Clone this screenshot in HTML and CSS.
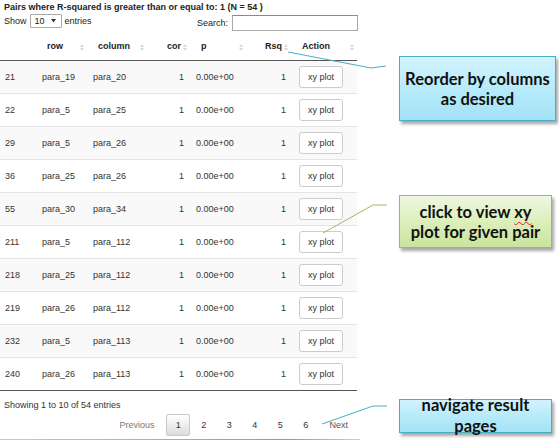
FILE: index.html
```html
<!DOCTYPE html>
<html>
<head>
<meta charset="utf-8">
<link rel="stylesheet" href="styles.css">
</head>
<body>
<div class="page">
  <div class="dt">
    <div class="title">Pairs where R-squared is greater than or equal to: 1 (N = 54 )</div>
    <div class="controls">
      <div class="length">Show <span class="select">10<svg class="caret" width="5" height="4" viewBox="0 0 5 4"><path d="M0 0H5L2.5 3.5Z" fill="#333"/></svg></span> entries</div>
      <div class="search">Search: <span class="input"></span></div>
    </div>
    <table class="grid">
      <colgroup>
        <col class="c0"><col class="c1"><col class="c2"><col class="c3"><col class="c4"><col class="c5"><col class="c6">
      </colgroup>
      <thead>
        <tr>
          <th></th>
          <th class="s">row</th>
          <th class="s">column</th>
          <th class="s num">cor</th>
          <th class="s">p</th>
          <th class="s num">Rsq</th>
          <th class="s">Action</th>
        </tr>
      </thead>
      <tbody>
        <tr><td>21</td><td>para_19</td><td>para_20</td><td class="num">1</td><td>0.00e+00</td><td class="num r2">1</td><td><span class="btn">xy plot</span></td></tr>
        <tr><td>22</td><td>para_5</td><td>para_25</td><td class="num">1</td><td>0.00e+00</td><td class="num r2">1</td><td><span class="btn">xy plot</span></td></tr>
        <tr><td>29</td><td>para_5</td><td>para_26</td><td class="num">1</td><td>0.00e+00</td><td class="num r2">1</td><td><span class="btn">xy plot</span></td></tr>
        <tr><td>36</td><td>para_25</td><td>para_26</td><td class="num">1</td><td>0.00e+00</td><td class="num r2">1</td><td><span class="btn">xy plot</span></td></tr>
        <tr><td>55</td><td>para_30</td><td>para_34</td><td class="num">1</td><td>0.00e+00</td><td class="num r2">1</td><td><span class="btn">xy plot</span></td></tr>
        <tr><td>211</td><td>para_5</td><td>para_112</td><td class="num">1</td><td>0.00e+00</td><td class="num r2">1</td><td><span class="btn">xy plot</span></td></tr>
        <tr><td>218</td><td>para_25</td><td>para_112</td><td class="num">1</td><td>0.00e+00</td><td class="num r2">1</td><td><span class="btn">xy plot</span></td></tr>
        <tr><td>219</td><td>para_26</td><td>para_112</td><td class="num">1</td><td>0.00e+00</td><td class="num r2">1</td><td><span class="btn">xy plot</span></td></tr>
        <tr><td>232</td><td>para_5</td><td>para_113</td><td class="num">1</td><td>0.00e+00</td><td class="num r2">1</td><td><span class="btn">xy plot</span></td></tr>
        <tr><td>240</td><td>para_26</td><td>para_113</td><td class="num">1</td><td>0.00e+00</td><td class="num r2">1</td><td><span class="btn">xy plot</span></td></tr>
      </tbody>
    </table>
    <div class="info">Showing 1 to 10 of 54 entries</div>
    <div class="paging">
      <span class="pb prev">Previous</span>
      <span class="pb n current">1</span>
      <span class="pb n">2</span>
      <span class="pb n">3</span>
      <span class="pb n">4</span>
      <span class="pb n">5</span>
      <span class="pb n">6</span>
      <span class="pb next">Next</span>
    </div>
    <div class="rule"></div>
  </div>

  <svg class="leaders" width="559" height="442" viewBox="0 0 559 442">
    <polyline points="288,52 371,68 386,66" fill="none" stroke="#4bacc6" stroke-width="1"/>
    <polyline points="387,205 373,205 323,233" fill="none" stroke="#9bbb59" stroke-width="1"/>
    <polyline points="322,424 373,406 387,406" fill="none" stroke="#4bacc6" stroke-width="1"/>
  </svg>

  <div class="callout blue c-reorder"><div class="txt">Reorder by columns<br>as desired</div></div>
  <div class="callout green c-click"><div class="txt">click to view <span class="spell">xy</span><br>plot for given pair</div></div>
  <div class="callout blue c-nav"><div class="txt">navigate result<br>pages</div></div>
</div>
</body>
</html>
```

FILE: styles.css
```css
* { box-sizing: border-box; }
html, body { margin: 0; padding: 0; background: #fff; }
body {
  font-family: "Liberation Sans", Arial, sans-serif;
  font-size: 9px;
  color: #333;
}
.page {
  position: relative;
  width: 559px;
  height: 442px;
  overflow: hidden;
}
.dt {
  width: 358px;
}
.title {
  font-weight: bold;
  line-height: 12px;
  padding: 1px 0 0 4px;
  color: #222;
  white-space: nowrap;
}
.controls {
  display: flex;
  justify-content: space-between;
  align-items: flex-start;
  height: 18px;
}
.length {
  padding-left: 4px;
  display: flex;
  align-items: center;
  height: 14px;
  margin-top: 1px;
  color: #222;
}
.select {
  display: inline-flex;
  align-items: center;
  justify-content: space-between;
  width: 32px;
  height: 14px;
  margin: 0 3px;
  padding: 0 5px 0 4px;
  border: 1px solid #a9a9a9;
  border-radius: 1px;
  background: #fff;
  color: #222;
}
.caret { display: block; }
.search {
  display: flex;
  align-items: center;
  height: 17px;
  margin-top: 1px;
  color: #222;
}
.input {
  display: inline-block;
  width: 126px;
  height: 16px;
  margin-left: 4px;
  border: 1px solid #a9a9a9;
  border-top-color: #8a8a8a;
  background: #fff;
}
.grid {
  margin-top: 2px;
  width: 357px;
  border-collapse: collapse;
  table-layout: fixed;
}
.c0 { width: 36px; }
.c1 { width: 51px; }
.c2 { width: 60px; }
.c3 { width: 43px; }
.c4 { width: 56px; }
.c5 { width: 45px; }
.c6 { width: 66px; }
th {
  position: relative;
  height: 27px;
  padding: 0 10px 0 11px;
  font-weight: bold;
  text-align: left;
  color: #222;
  border-bottom: 1px solid #555;
}
th.num { text-align: right; padding-right: 9px; }
th.s::before {
  content: "";
  position: absolute;
  right: 3px;
  top: 11px;
  width: 0;
  height: 0;
  border-left: 2.5px solid transparent;
  border-right: 2.5px solid transparent;
  border-bottom: 3px solid #d8d8d8;
}
th.s::after {
  content: "";
  position: absolute;
  right: 3px;
  top: 15px;
  width: 0;
  height: 0;
  border-left: 2.5px solid transparent;
  border-right: 2.5px solid transparent;
  border-top: 3px solid #d8d8d8;
}
td {
  height: 33px;
  padding: 0 6px;
  border-top: 1px solid #e4e4e4;
  white-space: nowrap;
  color: #333;
}
td:first-child { padding-left: 5px; }
tbody tr:first-child td { border-top: none; }
tbody tr:nth-child(odd) td { background: #f9f9f9; }
tbody tr:last-child td { border-bottom: 1px solid #555; }
td.num { text-align: right; }
td.r2 { padding-right: 5px; }
.btn {
  display: inline-flex;
  align-items: center;
  justify-content: center;
  width: 44px;
  height: 22px;
  margin-left: 2px;
  border: 1px solid #ccc;
  border-radius: 3px;
  background: #fff;
  color: #333;
}
.info {
  padding-left: 4px;
  margin-top: 7px;
  line-height: 14px;
  color: #333;
}
.paging {
  display: flex;
  justify-content: flex-end;
  align-items: center;
  height: 22px;
  margin-top: 2px;
}
.pb {
  display: flex;
  align-items: center;
  justify-content: center;
  height: 22px;
  border: 1px solid transparent;
  border-radius: 2px;
  margin-left: 2px;
  color: #333;
}
.pb.n { width: 23.5px; }
.prev { padding: 0 9px; color: #777; }
.next { padding: 0 9px; color: #555; }
.pb.current {
  border-color: #c9c9c9;
  background: linear-gradient(to bottom, #fff 0%, #dcdcdc 100%);
}
.rule {
  margin-top: 3px;
  height: 1px;
  width: 360px;
  background: linear-gradient(to right, #c8c8c8 0%, #999 80%, #ccc 100%);
}
.leaders {
  position: absolute;
  left: 0;
  top: 0;
  pointer-events: none;
}
.callout {
  position: absolute;
  display: flex;
  align-items: center;
  justify-content: center;
  text-align: center;
  font-family: Lato, "Open Sans", sans-serif;
  font-weight: 700;
  font-size: 16.5px;
  line-height: 20px;
  color: #111;
  box-shadow: 2px 3px 3px rgba(0,0,0,0.35);
}
.txt { white-space: nowrap; }
.blue {
  border: 1px solid #4bacc6;
  background: linear-gradient(to bottom, #d2f3fd 0%, #b7ebfa 50%, #a3e2f6 100%);
}
.green {
  border: 1px solid #9bbb59;
  background: linear-gradient(to bottom, #eff7e1 0%, #dcefbc 50%, #c9e49d 100%);
}
.c-reorder { left: 399px; top: 56px; width: 157px; height: 65px; }
.c-click { left: 399px; top: 195px; width: 153px; height: 53px; }
.c-nav { left: 399px; top: 399px; width: 153px; height: 34px; line-height: 21px; overflow: visible; }
.spell {
  text-decoration: underline wavy #e02020;
  text-decoration-thickness: 1px;
  text-underline-offset: 3px;
}
```
